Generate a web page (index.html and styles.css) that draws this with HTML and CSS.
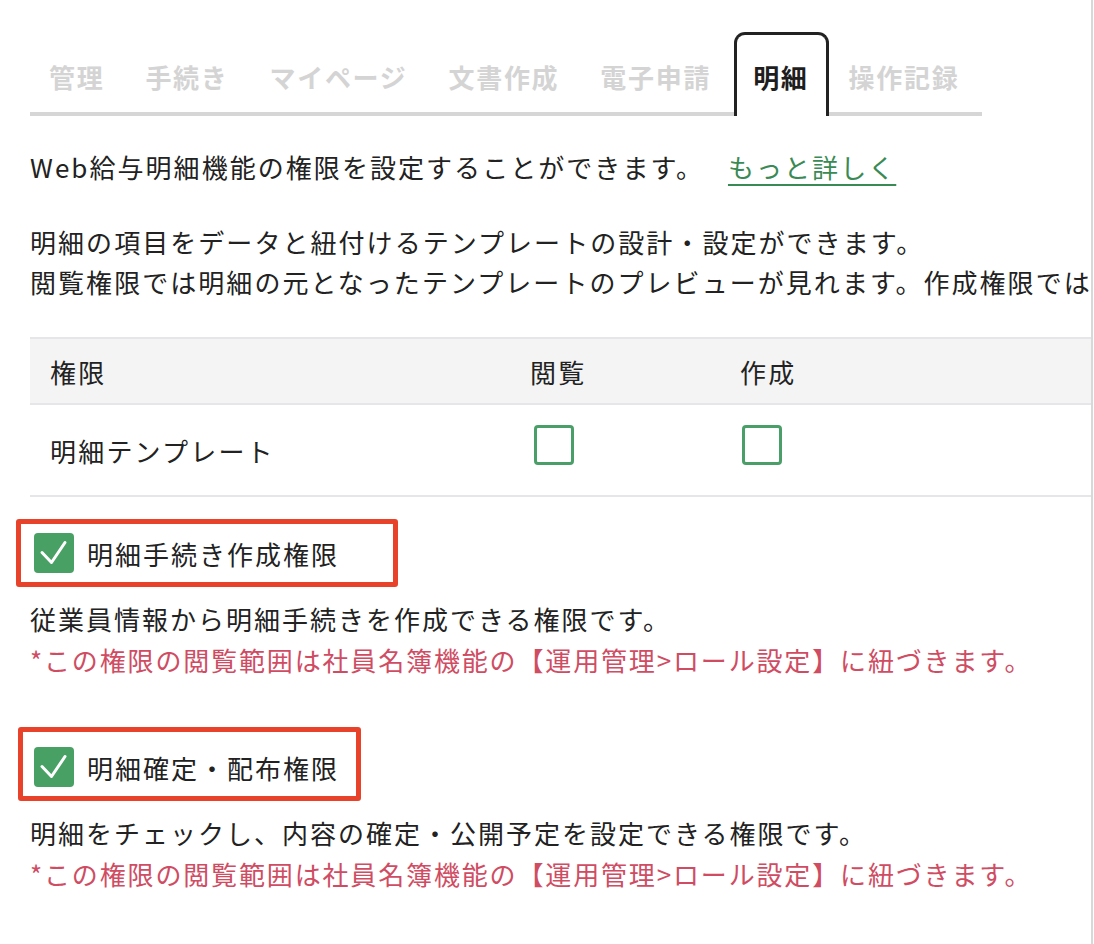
FILE: index.html
```html
<!DOCTYPE html>
<html lang="ja">
<head>
<meta charset="utf-8">
<title>明細 権限設定</title>
<link rel="stylesheet" href="styles.css">
</head>
<body>
<div class="panel">
  <nav class="tabs">
    <div class="tab">管理</div>
    <div class="tab">手続き</div>
    <div class="tab">マイページ</div>
    <div class="tab">文書作成</div>
    <div class="tab">電子申請</div>
    <div class="tab active">明細</div>
    <div class="tab">操作記録</div>
  </nav>

  <p class="intro">Web給与明細機能の権限を設定することができます。<a class="more" href="#">もっと詳しく</a></p>

  <p class="desc-block">明細の項目をデータと紐付けるテンプレートの設計・設定ができます。<br>閲覧権限では明細の元となったテンプレートのプレビューが見れます。作成権限では</p>

  <div class="table">
    <div class="row head">
      <div class="cell">権限</div>
      <div class="cell">閲覧</div>
      <div class="cell">作成</div>
    </div>
    <div class="row body">
      <div class="cell">明細テンプレート</div>
      <div class="cell"><span class="box"></span></div>
      <div class="cell"><span class="box"></span></div>
    </div>
  </div>

  <section class="perm first">
    <div class="perm-label">
      <span class="box checked"><svg viewBox="0 0 40 40" width="40" height="40"><polyline points="8,19.5 17.5,29.5 31,9.5" fill="none" stroke="#fff" stroke-width="3" stroke-linecap="round" stroke-linejoin="round"/></svg></span>
      <span class="label-text">明細手続き作成権限</span>
      <span class="mark mark-1"></span>
    </div>
    <p class="perm-desc">従業員情報から明細手続きを作成できる権限です。</p>
    <p class="perm-note">*この権限の閲覧範囲は社員名簿機能の【運用管理&gt;ロール設定】に紐づきます。</p>
  </section>

  <section class="perm second">
    <div class="perm-label">
      <span class="box checked"><svg viewBox="0 0 40 40" width="40" height="40"><polyline points="8,19.5 17.5,29.5 31,9.5" fill="none" stroke="#fff" stroke-width="3" stroke-linecap="round" stroke-linejoin="round"/></svg></span>
      <span class="label-text">明細確定・配布権限</span>
      <span class="mark mark-2"></span>
    </div>
    <p class="perm-desc">明細をチェックし、内容の確定・公開予定を設定できる権限です。</p>
    <p class="perm-note">*この権限の閲覧範囲は社員名簿機能の【運用管理&gt;ロール設定】に紐づきます。</p>
  </section>
</div>
</body>
</html>
```

FILE: styles.css
```css
html, body {
  margin: 0;
  padding: 0;
  background: #fff;
}

body {
  font-family: "Noto Sans CJK JP", "Noto Sans", sans-serif;
  color: #222;
  font-size: 26px;
}

.panel {
  width: 1093px;
  height: 944px;
  padding: 32px 0 0 30px;
  box-sizing: border-box;
  border-right: 2px solid #d8d8d8;
  overflow: hidden;
}

.tabs {
  display: flex;
  align-items: flex-end;
  width: 952px;
  height: 80px;
  border-bottom: 4px solid #d6d6d6;
}

.tab {
  padding: 10px 22px 0 19px;
  line-height: 70px;
  height: 80px;
  box-sizing: border-box;
  font-weight: 700;
  font-size: 26px;
  letter-spacing: 1.7px;
  color: #d4d4d4;
  white-space: nowrap;
}

.tab.active {
  color: #1e1e1e;
  background: #fff;
  border: 3px solid #222;
  border-bottom: 0;
  border-radius: 11px 11px 0 0;
  padding: 7px 17px 0 16px;
  height: 84px;
  margin-bottom: -4px;
  margin-left: 1px;
  margin-right: 1px;
}

p {
  margin: 0;
}

.intro {
  margin-top: 31px;
  line-height: 40px;
  letter-spacing: 2.05px;
  white-space: nowrap;
}

.more {
  margin-left: 24px;
  color: #3a8a55;
  text-decoration: underline;
  text-decoration-thickness: 2px;
  text-underline-offset: 6px;
}

.desc-block {
  margin-top: 35px;
  line-height: 40px;
  letter-spacing: 2.05px;
  white-space: nowrap;
}

.table {
  margin-top: 35px;
  width: 1100px;
}

.row {
  display: grid;
  grid-template-columns: 500px 210px 1fr;
  align-items: center;
}

.row.head {
  height: 64px;
  background: #f4f4f5;
  border-top: 2px solid #e6e6ea;
  border-bottom: 2px solid #e6e6ea;
}

.row.body {
  height: 90px;
  border-bottom: 2px solid #e6e6ea;
}

.cell {
  letter-spacing: 2.2px;
  white-space: nowrap;
}

.cell:first-child {
  padding-left: 20px;
}

.row.body .cell {
  display: flex;
  align-items: center;
}

.row.body .cell:nth-child(2) {
  padding-left: 4px;
  padding-bottom: 10px;
}

.row.body .cell:nth-child(3) {
  padding-left: 2px;
  padding-bottom: 10px;
}

.box {
  display: inline-block;
  width: 40px;
  height: 40px;
  box-sizing: border-box;
  border: 3px solid #4a9e68;
  border-radius: 4px;
  background: #fff;
}

.box.checked {
  border: 0;
  background: #48a064;
}

.box svg {
  display: block;
}

.perm-label {
  position: relative;
  display: flex;
  align-items: center;
  gap: 13px;
  height: 40px;
  padding-left: 4px;
}

.label-text {
  letter-spacing: 2px;
  white-space: nowrap;
}

.perm.first {
  margin-top: 36px;
}

.perm.second {
  margin-top: 67px;
}

.perm-desc {
  margin-top: 25px;
  line-height: 41px;
  letter-spacing: 2px;
  white-space: nowrap;
}

.perm-note {
  line-height: 41px;
  letter-spacing: 1.85px;
  color: #cf4c63;
  white-space: nowrap;
}

.mark {
  position: absolute;
  border: 5px solid #e8422b;
  border-radius: 3px;
  box-sizing: border-box;
  pointer-events: none;
}

.mark-1 {
  left: -14px;
  top: -14px;
  width: 382px;
  height: 68px;
}

.mark-2 {
  left: -12px;
  top: -20px;
  width: 343px;
  height: 74px;
}
```
